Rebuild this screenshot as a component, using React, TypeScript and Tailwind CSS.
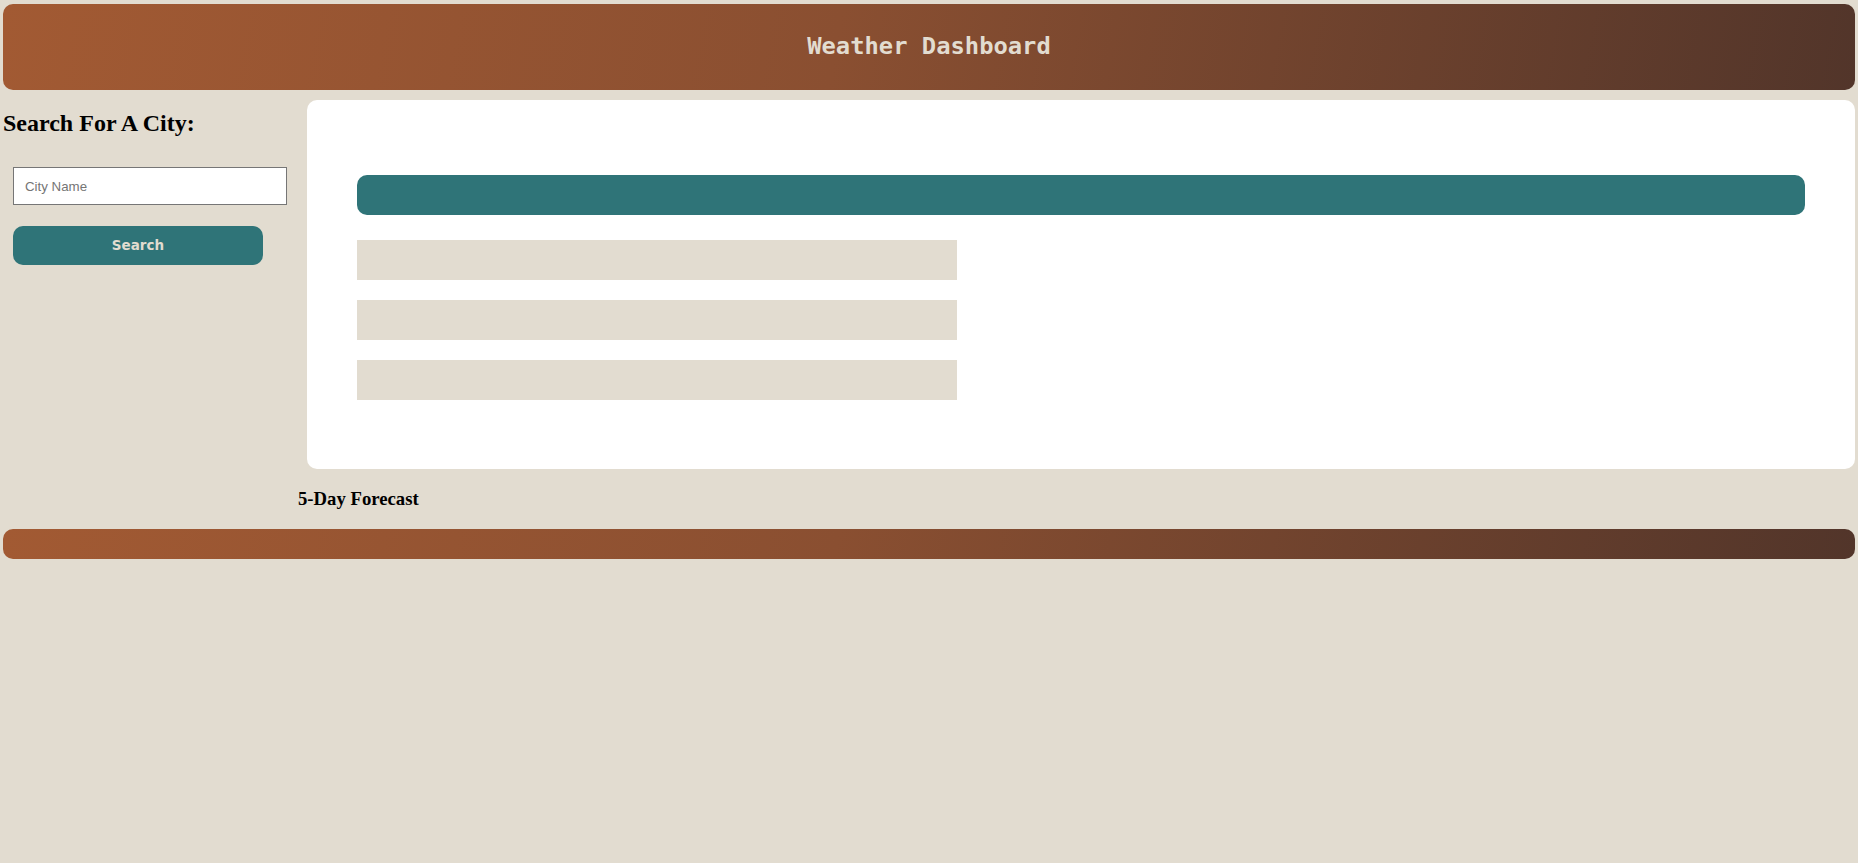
import React from "react";

export default function App() {
  return (
    <div className="min-h-[863px] w-full bg-[#e2dcd0] px-[3px] pt-[4px]">
      <header className="flex h-[86px] w-full items-center justify-center rounded-[10px] bg-[linear-gradient(100deg,#a25a33_0%,#8a4f31_45%,#52352a_100%)]">
        <h1 className="font-['DejaVu_Sans_Mono',monospace] text-[23.8px] font-bold text-[#e2dcd0]">Weather Dashboard</h1>
      </header>
      <div className="mt-[10px] flex">
        <aside className="w-[304px] shrink-0">
          <h2 className="mt-[9px] font-['Liberation_Serif',serif] text-[24px] leading-[28px] font-bold text-black">Search For A City:</h2>
          <input
            placeholder="City Name"
            className="mt-[30px] ml-[10px] block h-[38px] w-[274px] border border-[#767676] bg-white px-[11px] font-['Liberation_Sans',sans-serif] text-[13.3px] text-black placeholder:text-[#757575] outline-none"
          />
          <button className="mt-[21px] ml-[10px] block h-[39px] w-[250px] rounded-[10px] bg-[#2f7478] font-['DejaVu_Sans',sans-serif] text-[13.5px] font-bold text-[#e2dcd0]">
            Search
          </button>
        </aside>
        <main className="min-w-0 flex-1">
          <section className="h-[369px] rounded-[10px] bg-white px-[50px] pt-[75px]">
            <div className="h-[40px] rounded-[10px] bg-[#2f7478]" />
            <div className="mt-[25px] flex flex-col gap-[20px]">
              <div className="h-[40px] w-[600px] bg-[#e2dcd0]" />
              <div className="h-[40px] w-[600px] bg-[#e2dcd0]" />
              <div className="h-[40px] w-[600px] bg-[#e2dcd0]" />
            </div>
          </section>
          <h3 className="mt-[19px] ml-[-9px] font-['Liberation_Serif',serif] text-[18.72px] leading-[22px] font-bold text-black">5-Day Forecast</h3>
        </main>
      </div>
      <footer className="mt-[19px] h-[30px] w-full rounded-[10px] bg-[linear-gradient(100deg,#a25a33_0%,#8a4f31_45%,#52352a_100%)]" />
    </div>
  );
}
